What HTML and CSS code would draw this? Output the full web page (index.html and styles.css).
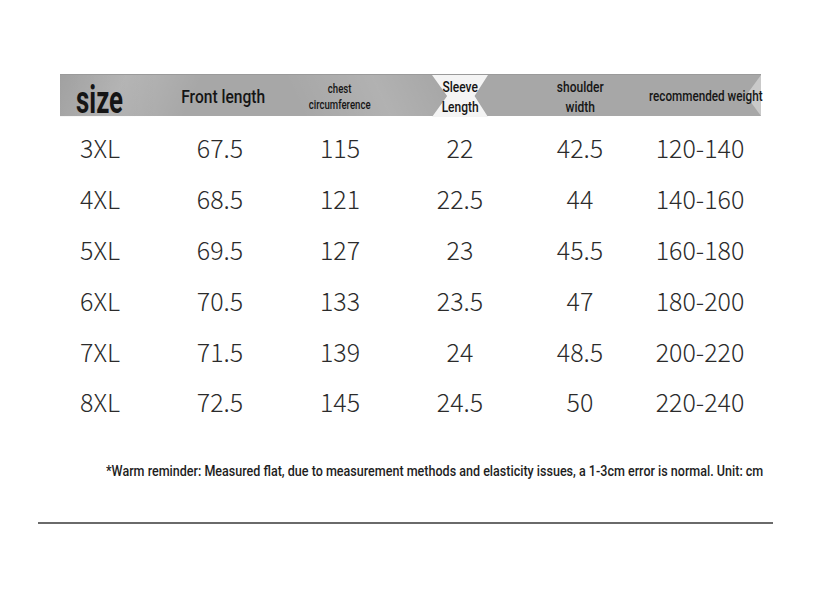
FILE: index.html
```html
<!DOCTYPE html>
<html>
<head>
<meta charset="utf-8">
<link rel="stylesheet" href="styles.css">
</head>
<body>
<div class="page">
  <div class="head">
    <div class="hcell h-size"><span class="sq">size</span></div>
    <div class="hcell h-front"><span class="sq">Front length</span></div>
    <div class="hcell h-small"><span class="sq">chest<br>circumference</span></div>
    <div class="hcell h-mid h-sleeve"><span class="sq">Sleeve<br>Length</span></div>
    <div class="hcell h-mid"><span class="sq">shoulder<br>width</span></div>
    <div class="hcell h-mid h-weight"><span class="sq">recommended weight</span></div>
  </div>
  <div class="rows">
    <div class="row"><span>3XL</span><span>67.5</span><span>115</span><span>22</span><span>42.5</span><span>120-140</span></div>
    <div class="row"><span>4XL</span><span>68.5</span><span>121</span><span>22.5</span><span>44</span><span>140-160</span></div>
    <div class="row"><span>5XL</span><span>69.5</span><span>127</span><span>23</span><span>45.5</span><span>160-180</span></div>
    <div class="row"><span>6XL</span><span>70.5</span><span>133</span><span>23.5</span><span>47</span><span>180-200</span></div>
    <div class="row"><span>7XL</span><span>71.5</span><span>139</span><span>24</span><span>48.5</span><span>200-220</span></div>
    <div class="row"><span>8XL</span><span>72.5</span><span>145</span><span>24.5</span><span>50</span><span>220-240</span></div>
  </div>
  <p class="note"><span class="note-text">*Warm reminder: Measured flat, due to measurement methods and elasticity issues, a 1-3cm error is normal. Unit: cm</span></p>
  <div class="rule"></div>
</div>
</body>
</html>
```
FILE: styles.css
```css
html, body {
  margin: 0;
  padding: 0;
  background: #fff;
}
.page {
  width: 820px;
  height: 615px;
  padding-top: 74px;
  box-sizing: border-box;
  overflow: hidden;
}
.head {
  margin-left: 60px;
  width: 701px;
  height: 42px;
  display: grid;
  grid-template-columns: 100px 120px 120px 120px 120px 121px;
  background:
    linear-gradient(115deg, rgba(255,255,255,0) 0px, rgba(255,255,255,0.18) 60px, rgba(255,255,255,0) 130px),
    linear-gradient(65deg, rgba(255,255,255,0) 220px, rgba(255,255,255,0.12) 300px, rgba(255,255,255,0) 360px),
    #a7a7a7;
  border-top: 1px solid #9a9a9a;
  box-sizing: border-box;
  position: relative;
  font-family: "Roboto", "Liberation Sans", sans-serif;
  color: #151515;
}
.head::after {
  content: "";
  position: absolute;
  right: 0;
  top: 0;
  width: 15px;
  height: 100%;
  background: #c9c9c9;
  clip-path: polygon(100% 0, 100% 100%, 0 50%);
  z-index: 0;
}
.hcell {
  display: flex;
  align-items: center;
  justify-content: center;
  text-align: center;
  position: relative;
  white-space: nowrap;
  z-index: 1;
}
.sq {
  display: inline-block;
  transform: scaleX(0.8);
}
.h-size {
  font-size: 38px;
  font-weight: bold;
  align-items: flex-end;
  padding-right: 20px;
  line-height: 1;
  background: linear-gradient(90deg, rgba(0,0,0,0.04), rgba(0,0,0,0));
}
.h-size .sq {
  transform: scaleX(0.68);
  margin-bottom: -2px;
}
.h-front {
  font-size: 19px;
  font-weight: 500;
  padding-left: 6px;
}
.h-front .sq {
  transform: scaleX(0.82);
}
.h-small {
  font-size: 12px;
  line-height: 16px;
  padding-top: 1px;
}
.h-small .sq {
  font-weight: 500;
}
.h-mid {
  font-size: 15px;
  line-height: 20px;
  font-weight: 500;
  padding-top: 2px;
}
.h-sleeve::before {
  content: "";
  position: absolute;
  left: 32px;
  top: 0;
  width: 56px;
  height: 100%;
  background: #f4f4f4;
  clip-path: polygon(0 0, 100% 0, 76% 50%, 100% 100%, 0 100%, 27% 50%);
  z-index: -1;
}
.h-weight {
  padding-left: 10px;
  padding-top: 0;
  line-height: 1;
}
.h-weight .sq {
  transform: scaleX(0.78);
}
.rows {
  margin-top: 6px;
  margin-left: 40px;
}
.row {
  display: grid;
  grid-template-columns: repeat(6, 120px);
  height: 50.8px;
  align-items: center;
  font-family: "Noto Sans CJK SC", "Noto Sans", sans-serif;
  font-weight: 300;
  font-size: 25px;
  color: #2b2b2b;
}
.row span {
  text-align: center;
}
.row span:first-child {
  text-align: left;
  padding-left: 40px;
}
.note {
  margin: 36px 0 0 106px;
  font-family: "Roboto", "Liberation Sans", sans-serif;
  font-weight: 500;
  font-size: 15px;
  line-height: 16px;
  color: #1e1e1e;
  white-space: nowrap;
}
.note-text {
  display: inline-block;
  transform: scaleX(0.836);
  transform-origin: left center;
}
.rule {
  margin: 43px 0 0 38px;
  width: 735px;
  height: 2px;
  background: #6a6a6a;
}
```
